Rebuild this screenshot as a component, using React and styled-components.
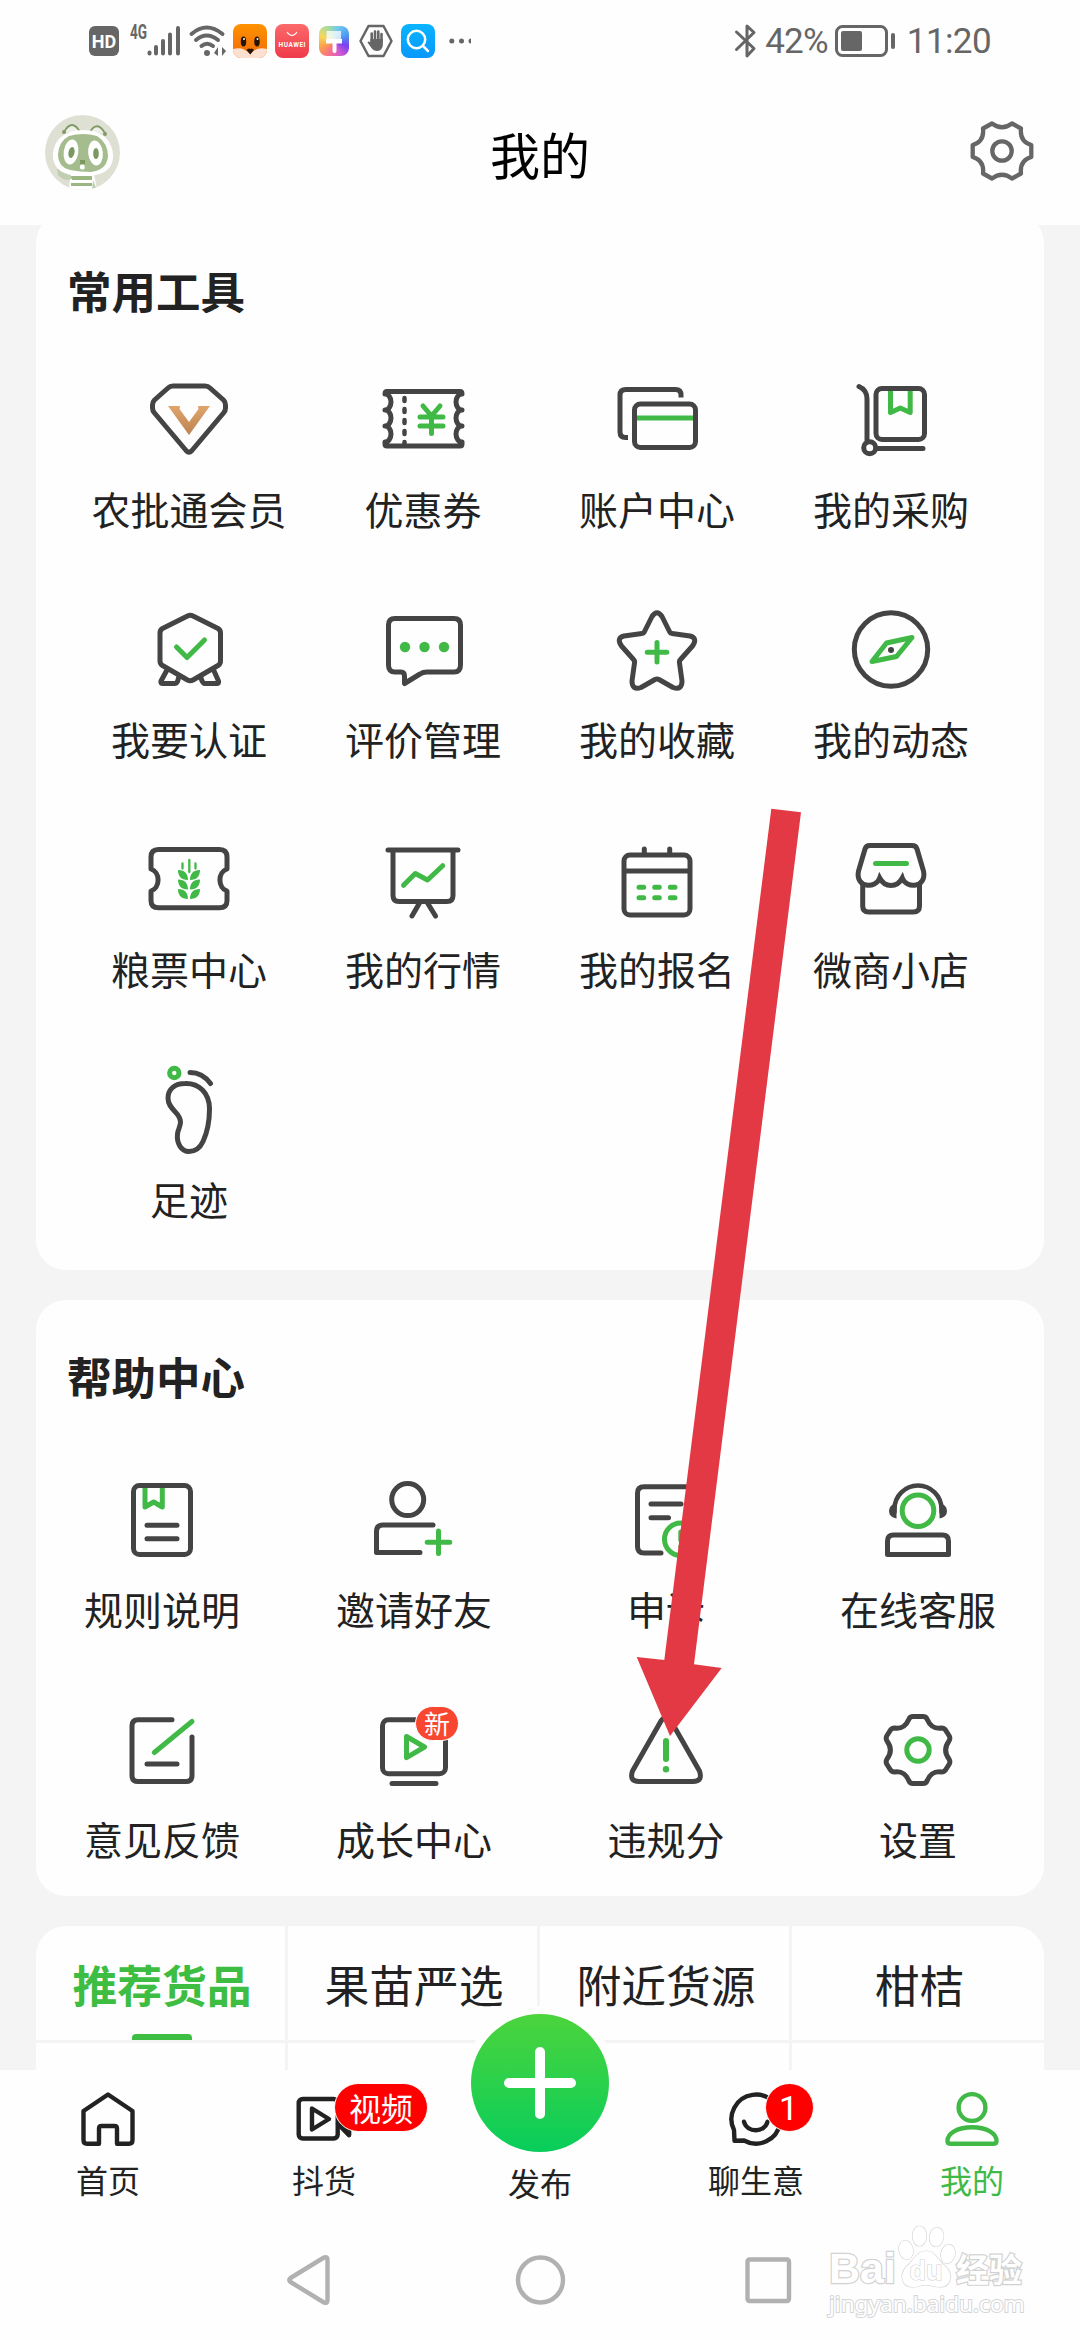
import React from "react";
import styled, { createGlobalStyle } from "styled-components";

const GREEN = "#40b946";
const INK = "#444444";

const GlobalStyle = createGlobalStyle`
    * { box-sizing: border-box; }
    body {
        margin: 0;
        background: #ffffff;
        font-family: "Noto Sans CJK SC", "Noto Sans", sans-serif;
        color: #222222;
    }
`;

const Screen = styled.div`
    position: relative;
    width: 1080px;
    height: 2340px;
    display: flex;
    flex-direction: column;
    overflow: hidden;
    background: #fefefe;
`;

/* ---------- status bar ---------- */

const StatusBar = styled.div`
    height: 80px;
    display: flex;
    align-items: center;
    justify-content: space-between;
    padding: 2px 89px 0;
    color: #666666;
    font-family: Roboto, sans-serif;
`;
const StatusSide = styled.div`
    display: flex;
    align-items: center;
`;
const HdTag = styled.span`
    width: 30px;
    height: 30px;
    border-radius: 6px;
    background: #666666;
    color: #ffffff;
    font: 700 18px/31px Roboto, sans-serif;
    text-align: center;
`;
const NetType = styled.span`
    align-self: flex-start;
    margin-left: 11px;
    width: 17px;
    font: 700 20px/18px Roboto, sans-serif;
    transform: scaleX(0.68);
    transform-origin: left center;
    margin-top: -1px;
`;
const AppTile = styled.span`
    display: flex;
    align-items: center;
    justify-content: center;
    width: ${p => p.$size || 34}px;
    height: ${p => p.$size || 34}px;
    margin-left: ${p => p.$gap || 8}px;
    border-radius: 8px;
    overflow: hidden;
    background: ${p => p.$bg};
`;
const Glyph = styled.svg`
    display: block;
    flex: none;
    width: ${p => p.$w}px;
    height: ${p => p.$h}px;
    margin-left: ${p => p.$gap || 0}px;
    overflow: visible;
`;
const StatusText = styled.span`
    font-size: 35px;
    line-height: 40px;
    letter-spacing: ${p => p.$track || 0}px;
    margin-left: ${p => p.$gap || 0}px;
    padding-top: 1px;
`;

/* ---------- header ---------- */

const Header = styled.header`
    height: 145px;
    padding: 0 45px;
    display: grid;
    grid-template-columns: 75px 1fr 75px;
    justify-items: center;
    align-items: center;
`;
const Title = styled.h1`
    margin: 0;
    padding-top: 1px;
    font-size: 50px;
    line-height: 70px;
    font-weight: 400;
    color: #000000;
`;
const HeaderAction = styled.div`
    padding: 0 0 3px 9px;
`;

/* ---------- cards ---------- */

const Content = styled.main`
    height: 1845px;
    padding: 0 36px;
    overflow: hidden;
    background: #f4f4f4;
    display: flex;
    flex-direction: column;
    gap: 30px;
`;
const Card = styled.section`
    flex: none;
    background: #fefefe;
    border-radius: 30px;
    margin-top: ${p => p.$shift || 0}px;
    padding-bottom: ${p => p.$bottom}px;
`;
const CardTitle = styled.h2`
    margin: 0;
    height: ${p => p.$height}px;
    padding: ${p => p.$top}px 0 0 31px;
    font-size: 44.5px;
    line-height: 58px;
    font-weight: 700;
`;
const Grid = styled.div`
    display: grid;
    grid-template-columns: repeat(4, 1fr);
    row-gap: 68px;
    padding: 0 ${p => p.$inset || 0}px;
`;
const Cell = styled.div`
    display: flex;
    flex-direction: column;
    align-items: center;
    gap: 14px;
    font-size: 39px;
    line-height: 58px;
    white-space: nowrap;
`;
const IconBox = styled.div`
    position: relative;
    width: 90px;
    height: 90px;
`;
const NewBadge = styled.span`
    position: absolute;
    left: 46px;
    top: 1px;
    width: 44px;
    height: 35px;
    border-radius: 18px;
    border: 1px solid #ffffff;
    background: #f94630;
    color: #ffffff;
    font-size: 26px;
    line-height: 31px;
    text-align: center;
`;

/* ---------- goods tabs ---------- */

const Tabs = styled.div`
    flex: none;
    display: grid;
    grid-template-columns: 249px 249px 249px 252px;
    gap: 3px;
    border-radius: 30px 30px 0 0;
    overflow: hidden;
`;
const Tab = styled.div`
    height: 114px;
    display: flex;
    flex-direction: column;
    align-items: center;
    justify-content: space-between;
    background: #fefefe;
    font-size: 44.8px;
    line-height: 64px;
    padding-top: 26px;
    padding-left: 3px;
    font-weight: ${p => (p.$active ? 700 : 400)};
    color: ${p => (p.$active ? "#3dbd42" : "#222222")};
`;
const TabMark = styled.span`
    width: 60px;
    height: 6px;
    border-radius: 4px 4px 0 0;
    background: #3dbd42;
`;
const GoodsCell = styled.div`
    height: 60px;
    background: #fefefe;
`;

/* ---------- bottom navigation ---------- */

const NavBar = styled.nav`
    position: relative;
    height: 150px;
    display: grid;
    grid-template-columns: repeat(5, 1fr);
    background: #fefefe;
`;
const NavItem = styled.div`
    position: relative;
    display: flex;
    flex-direction: column;
    align-items: center;
    gap: 10px;
    padding-top: 19px;
    font-size: 32px;
    line-height: 40px;
    color: ${p => (p.$active ? "#40b946" : "#222222")};
`;
const PublishItem = styled(NavItem)`
    padding-top: 0;
    margin-top: -56px;
`;
const PublishButton = styled.span`
    flex: none;
    width: 138px;
    height: 138px;
    border-radius: 50%;
    background: linear-gradient(to bottom, #4cd43c, #08cd5b);
    box-shadow: 0 0 0 8px #fefefe;
    display: flex;
    align-items: center;
    justify-content: center;
`;
const NavBadge = styled.span`
    position: absolute;
    left: ${p => p.$left}px;
    top: 13px;
    width: ${p => p.$width}px;
    height: 49px;
    border-radius: 25px;
    border: 1px solid #ffffff;
    background: #fe0000;
    color: #ffffff;
    font-size: 32px;
    line-height: 46px;
    text-align: center;
`;
const CountBadge = styled(NavBadge)`
    font-family: Roboto, sans-serif;
    font-size: 34px;
    line-height: 49px;
    padding-right: 2px;
`;
const SystemBar = styled.div`
    height: 120px;
    padding: 0 282px 0 279px;
    display: flex;
    align-items: center;
    justify-content: space-between;
`;

/* ---------- things lying over the page ---------- */

const ArrowLayer = styled.svg`
    position: absolute;
    left: 630px;
    top: 800px;
    width: 180px;
    height: 940px;
    pointer-events: none;
`;
const Watermark = styled.div`
    position: absolute;
    left: 829px;
    top: 2221px;
    width: 200px;
    color: #ffffff;
    -webkit-text-stroke: 2.4px #d2d2d2;
    paint-order: stroke fill;
`;
const WatermarkTop = styled.div`
    height: 66px;
    display: flex;
    align-items: flex-end;
    font: 700 43px/38px "Liberation Sans", sans-serif;
`;
const WatermarkCn = styled.span`
    font: 700 33px/38px "Noto Sans CJK SC", sans-serif;
    margin-left: 3px;
`;
const WatermarkUrl = styled.div`
    margin-top: 4px;
    font: 400 22.6px/26px "Noto Sans", sans-serif;
    -webkit-text-stroke: 2px #d6d6d6;
`;

/* every line icon is drawn around its own centre */
const Line = ({ size = 90, color = INK, width = 5, cap = "round", children }) => (
    <Glyph
        $w={size}
        $h={size}
        viewBox={`${-size / 2} ${-size / 2} ${size} ${size}`}
        fill="none"
        stroke={color}
        strokeWidth={width}
        strokeLinecap={cap}
        strokeLinejoin="round"
    >
        {children}
    </Glyph>
);

const icons = {
    vip: (
        <>
            <defs>
                <linearGradient id="gold" x1="0" y1="0" x2="0" y2="1">
                    <stop offset="0" stopColor="#dfa56b" />
                    <stop offset="1" stopColor="#bd8250" />
                </linearGradient>
            </defs>
            <path d="M-16 -34H16Q19 -34 21 -32L34.500 -20Q36.500 -18 36.500 -15V-12Q36.500 -9 34.500 -7L2.500 31Q0 33.500 -2.500 31L-34.500 -7Q-36.500 -9 -36.500 -12V-15Q-36.500 -18 -34.500 -20L-21 -32Q-19 -34 -16 -34Z" />
            <path d="M-21 -14H-9L-9.500 -11L0 2L9.500 -11L9 -14H21L0 15Z" fill="url(#gold)" stroke="none" />
        </>
    ),
    coupon: (
        <>
            <path d="M-36 -28.500H37Q39 -28.500 39 -26A6 8 0 0 0 39 -10A6 8 0 0 0 39 6A6 8 0 0 0 39 22V24Q39 26 37 26H-36Q-38 26 -38 24V22A6 8 0 0 0 -38 6A6 8 0 0 0 -38 -10A6 8 0 0 0 -38 -26Q-38 -28.500 -36 -28.500Z" />
            <path d="M-18.500 -22V25" strokeWidth="4.500" strokeDasharray="3 8" />
            <path d="M0 -14L8.500 -4L17 -14M8.500 -4V13.500M-3 -3H20M-3 6H20" stroke={GREEN} />
        </>
    ),
    account: (
        <>
            <path d="M24 -22.500V-25Q24 -30.500 18.500 -30.500H-31Q-37 -30.500 -37 -25V12Q-37 17.500 -31.500 17.500H-29" strokeLinecap="butt" />
            <path d="M-20 -2H36" stroke={GREEN} strokeLinecap="butt" />
            <rect x="-22.500" y="-16" width="61" height="43.500" rx="6" />
        </>
    ),
    purchase: (
        <>
            <path d="M-0.500 -29V-7.500L9.300 -12L19.200 -7.500V-29" stroke={GREEN} strokeLinecap="butt" />
            <path d="M-32 -33.500Q-24 -30 -24 -21V20M-14 28.500H32" />
            <circle cx="-21.300" cy="27.700" r="6" />
            <rect x="-15" y="-31.500" width="48.500" height="51" rx="6" />
        </>
    ),
    certify: (
        <>
            <path d="M-1.500 -34Q1.300 -35.500 4 -34L29 -21.500Q31.500 -20 31.500 -17V11Q31.500 14 29 15.500L4 30Q1.300 31.500 -1.500 30L-26.500 15.500Q-29 14 -29 11V-17Q-29 -20 -26.500 -21.500Z" />
            <path d="M-22 20L-28 31Q-29 33.500 -26 33.500H-14Q-11.500 33.500 -10.500 28M24.600 20L29.500 31Q30.500 33.500 27.500 33.500H16Q13.500 33.500 12 28" />
            <path d="M-12.500 -3L-2 7.500L15.500 -10" stroke={GREEN} />
        </>
    ),
    review: (
        <>
            <path d="M-28 -31.500H31Q37.500 -31.500 37.500 -25V15Q37.500 22 31 22H4Q0 22 -3 24L-18.500 33.500V26Q-18.500 22 -22 22H-28Q-34.500 22 -34.500 15V-25Q-34.500 -31.500 -28 -31.500Z" />
            <g fill={GREEN} stroke="none">
                <circle cx="-18" cy="-3" r="5.200" />
                <circle cx="1.500" cy="-3" r="5.200" />
                <circle cx="21" cy="-3" r="5.200" />
            </g>
        </>
    ),
    favorite: (
        <>
            <path d="M-5 -33.500Q0 -41 5 -33.500L13 -17.500Q13.500 -16.500 15 -16.500L33 -14Q41 -12 35.500 -4L23.500 9.500Q22 11 22.500 13L25 31Q25 40.500 16 37.500L2 29.500Q0 28.500 -2 29.500L-16 37.500Q-25 40.500 -25 31L-22.500 13Q-22 11 -23.500 9.500L-35.500 -4Q-41 -12 -33 -14L-15 -16.500Q-13.500 -16.500 -13 -17.500Z" />
            <path d="M0 -7.500V12M-9.800 2.200H9.800" stroke={GREEN} />
        </>
    ),
    moments: (
        <>
            <circle cx="0" cy="-0.500" r="36.700" />
            <path d="M-19 11.500L-4.500 -7L21 -12.500L5.500 6.500Z" stroke={GREEN} />
            <circle cx="0" cy="0" r="3" fill={INK} stroke="none" />
        </>
    ),
    grain: (
        <>
            <path d="M-30.500 -30.500H30.500Q38 -30.500 38 -23V-11A10 11.500 0 0 0 38 11V20.500Q38 27.800 30.500 27.800H-30.500Q-38 27.800 -38 20.500V11A10 11.500 0 0 0 -38 -11V-23Q-38 -30.500 -30.500 -30.500Z" />
            <path d="M-6.500 -16.500V-11.500M0.300 -20V-8M6.500 -16.500V-11.500" stroke={GREEN} strokeWidth="2.300" />
            {[0, 9.500, 19].map(y => (
                <path
                    key={y}
                    transform={`translate(0 ${y})`}
                    d="M-11 -10C-4 -10 -1 -6 -1 0C-8 0 -11 -4 -11 -10ZM11 -10C4 -10 1 -6 1 0C8 0 11 -4 11 -10Z"
                    fill={GREEN}
                    stroke="none"
                />
            ))}
        </>
    ),
    market: (
        <>
            <path d="M-35 -30H35M-30 -29V15.500Q-30 21.500 -24 21.500H24Q30 21.500 30 15.500V-29M-3.500 23L-11 36M4.500 23L12.500 36" />
            <path d="M-19.500 5.300L-7.700 -6.500L4.500 0L19.700 -14.300" stroke={GREEN} />
        </>
    ),
    signup: (
        <>
            <rect x="-33" y="-25" width="66" height="60" rx="6" />
            <path d="M-32 -9H32M-12.700 -31V-26M12.700 -31V-26" />
            <path d="M-18 7.300H-13.300M-2.300 7.300H2.300M13.300 7.300H18M-18 17.700H-13.300M-2.300 17.700H2.300M13.300 17.700H18" stroke={GREEN} />
        </>
    ),
    shop: (
        <>
            <path d="M-28.300 5V26Q-28.300 32 -22.300 32H22.300Q28.500 32 28.500 26V5" strokeLinecap="butt" />
            <path d="M-21 -34.500H21Q25 -34.500 26 -31L32.500 -9C36 8 15 9 11.300 -2C6 8 -6 8 -11.300 -2C-15 9 -36 8 -32.500 -9L-26 -31Q-25 -34.500 -21 -34.500Z" strokeLinejoin="miter" />
            <path d="M-15.500 -16.500H15.500" stroke={GREEN} />
        </>
    ),
    footprint: (
        <>
            <circle cx="-14.700" cy="-37" r="4.700" stroke={GREEN} />
            <path d="M1 -37.500Q13.500 -37.500 21.500 -26.500" />
            <path d="M-4 -26.500C10 -27 20.500 -17 20.500 -1C20.500 12 17.500 24 14 31.500C11 38 6 41.500 0 41.500C-8 41.500 -12.500 33 -11.500 24C-11 19 -8.500 17 -8.500 12C-8.500 2 -21 0 -21 -12C-21 -21 -14 -26.500 -4 -26.500Z" />
        </>
    ),
    rules: (
        <>
            <path d="M-17 -32V-13L-8.300 -18L0.300 -13V-32" stroke={GREEN} strokeLinecap="butt" />
            <rect x="-28.500" y="-34.500" width="57" height="69" rx="6" />
            <path d="M-15 5.300H15M-15 18.700H15" />
        </>
    ),
    invite: (
        <>
            <circle cx="-6.300" cy="-20.400" r="16" />
            <path d="M19 5H-31Q-37.500 5 -37.500 11.500V32.500H6" />
            <path d="M24.500 11V33.500M13.200 22.300H35.800" stroke={GREEN} />
        </>
    ),
    appeal: (
        <>
            <path d="M-5 33H-22Q-28.500 33 -28.500 26.500V-27Q-28.500 -33.300 -22 -33.300H20Q26.500 -33.300 26.500 -27V-6M-15 -16H15M-15 -2.300H2.500" />
            <circle cx="14.800" cy="19.300" r="16.300" stroke={GREEN} />
            <path d="M14.800 12V20M14.800 26.500V27" stroke={GREEN} />
        </>
    ),
    service: (
        <>
            <circle cx="0" cy="-9.300" r="15.800" stroke={GREEN} />
            <path d="M-23.500 -8V-11A23.500 23.500 0 0 1 23.500 -11V-8" strokeWidth="4.500" />
            <path d="M-21.500 -17Q-29 -15 -29 -9T-21.500 -1.500ZM21.500 -17Q29 -15 29 -9T21.500 -1.500Z" fill={INK} stroke="none" />
            <path d="M-24.500 15H24.500Q30.500 15 30.500 21V34.500H-30.500V21Q-30.500 15 -24.500 15Z" />
        </>
    ),
    feedback: (
        <>
            <path d="M10 -30.300H-24Q-30 -30.300 -30 -24.300V25.500Q-30 31.500 -24 31.500H24Q30 31.500 30 25.500V-13M-15 14H15" />
            <path d="M-7.700 2.500L30 -28.500" stroke={GREEN} />
        </>
    ),
    growth: (
        <>
            <rect x="-31.500" y="-30.300" width="63" height="54" rx="6" />
            <path d="M-22 33.500H22" />
            <path d="M-7.500 -13.500L10.500 -3L-7.500 7.700Z" stroke={GREEN} />
        </>
    ),
    violation: (
        <>
            <path d="M-5 -29Q0 -36 5 -29L33.500 21Q37 31.500 27 31.500H-27Q-37 31.500 -33.500 21Z" />
            <path d="M0 -9V9" stroke={GREEN} strokeWidth="6" />
            <circle cx="0" cy="19.300" r="3.200" fill={GREEN} stroke="none" />
        </>
    ),
    settings: (
        <>
            <path d="M-5 -33.500H5Q8 -33.500 9 -31C12 -24 16 -21 23.500 -22Q26 -22 27.500 -20L31.300 -14Q32.500 -11.500 31 -9C26.500 -3 26.500 3 31 9Q32.500 11.500 31.300 14L27.500 20Q26 22 23.500 22C16 21 12 24 9 31Q8 33.500 5 33.500H-5Q-8 33.500 -9 31C-12 24 -16 21 -23.500 22Q-26 22 -27.500 20L-31.300 14Q-32.500 11.500 -31 9C-26.500 3 -26.500 -3 -31 -9Q-32.500 -11.500 -31.300 -14L-27.500 -20Q-26 -22 -23.500 -22C-16 -21 -12 -24 -9 -31Q-8 -33.500 -5 -33.500Z" />
            <circle cx="0" cy="0" r="11.200" stroke={GREEN} />
        </>
    ),
    home: <path d="M0 -24.500L24.500 -8V21Q24.500 24.700 21 24.700H9V9.500Q9 7 6.500 7H-6.500Q-9 7 -9 9.500V24.700H-21Q-24.500 24.700 -24.500 21V-8Z" />,
    video: (
        <>
            <rect x="-25.300" y="-20" width="39" height="39.500" rx="4" />
            <path d="M-12 -10.500L5 0L-12 10.500ZM14 5L25 16V-15L14 -5" />
            <path d="M15 5L25 16V5Z" fill="#222222" />
        </>
    ),
    chat: <path d="M-22 11A24.500 24.500 0 1 1 -12 21.500L-21.500 21.800ZM-12 2.700C-9 14 8.500 14 11.500 2.700" />,
    mine: (
        <>
            <circle cx="0" cy="-11.500" r="13.400" />
            <path d="M-22 24.700H22Q24.500 24.700 24.500 22C24.500 14 14 8.300 0 8.300S-24.500 14 -24.500 22Q-24.500 24.700 -22 24.700Z" />
        </>
    ),
};

const tools = [
    ["农批通会员", "vip"],
    ["优惠券", "coupon"],
    ["账户中心", "account"],
    ["我的采购", "purchase"],
    ["我要认证", "certify"],
    ["评价管理", "review"],
    ["我的收藏", "favorite"],
    ["我的动态", "moments"],
    ["粮票中心", "grain"],
    ["我的行情", "market"],
    ["我的报名", "signup"],
    ["微商小店", "shop"],
    ["足迹", "footprint"],
];

const helps = [
    ["规则说明", "rules"],
    ["邀请好友", "invite"],
    ["申诉", "appeal"],
    ["在线客服", "service"],
    ["意见反馈", "feedback"],
    ["成长中心", "growth", "新"],
    ["违规分", "violation"],
    ["设置", "settings"],
];

const Entries = ({ list, inset }) => (
    <Grid $inset={inset}>
        {list.map(([label, icon, badge]) => (
            <Cell key={label}>
                <IconBox>
                    <Line>{icons[icon]}</Line>
                    {badge && <NewBadge>{badge}</NewBadge>}
                </IconBox>
                <span>{label}</span>
            </Cell>
        ))}
    </Grid>
);

const Status = () => (
    <StatusBar>
        <StatusSide>
            <HdTag>HD</HdTag>
            <NetType>4G</NetType>
            <Glyph $w={34} $h={32} $gap={0} viewBox="0 0 34 32" stroke="#666666" strokeWidth="4" strokeLinecap="round">
                <path d="M2.500 27.500V28.500M9 22V28.500M16 16V28.500M23 9.500V28.500M31 3V28.500" />
            </Glyph>
            <Glyph $w={38} $h={32} $gap={8} viewBox="0 0 38 32" fill="none" stroke="#666666" strokeWidth="4" strokeLinecap="round">
                <path d="M2.500 9Q17.500 -4 33.500 9M7 15Q17.500 6 29 15M12.500 21Q18 16.500 24 21" />
                <circle cx="18" cy="28" r="3" fill="#666666" stroke="none" />
                <path d="M29 22V31L25 28M33 31V22L37 26" fill="#666666" stroke="none" />
            </Glyph>
            <AppTile $bg="linear-gradient(#ff9200, #f06a0a)" $gap={6}>
                <svg width="34" height="34" viewBox="0 0 34 34">
                    <path d="M0 25Q10 22 17 30Q24 22 34 25V34H0Z" fill="#fde0cf" />
                    <ellipse cx="10.500" cy="17.500" rx="2.700" ry="5" fill="#241405" />
                    <ellipse cx="24" cy="17.500" rx="2.700" ry="5" fill="#241405" />
                    <circle cx="11" cy="15" r="1" fill="#ffffff" />
                    <circle cx="24.500" cy="15" r="1" fill="#ffffff" />
                    <path d="M13.500 26Q15.500 23.500 17.300 25Q19 23.500 21 26L17.300 30.500Z" fill="#241405" />
                </svg>
            </AppTile>
            <AppTile $bg="linear-gradient(#fb6a6a, #ef3a49)">
                <svg width="34" height="34" viewBox="0 0 34 34">
                    <path d="M12 8Q17 15 22 8" fill="none" stroke="#ffffff" strokeWidth="1.200" />
                    <text x="17" y="22.500" fill="#ffffff" fontSize="6.500" fontWeight="700" fontFamily="Roboto, sans-serif" textAnchor="middle" textLength="27">
                        HUAWEI
                    </text>
                </svg>
            </AppTile>
            <AppTile $size={30} $gap={10} $bg="conic-gradient(from 20deg, #6fc8f0, #4a9bf0, #7a3ff2, #d25ad0, #f96f8c, #fba04a, #f9d65c, #a5dca0, #6fc8f0)">
                <svg width="30" height="30" viewBox="0 0 30 30">
                    <path d="M7.500 5H22V13H7.500Z" fill="#ffffff" opacity="0.75" />
                    <path d="M7 13H23V17.500H17.500V25.500Q15.500 29 13.500 25.500V17.500H7Z" fill="#ffffff" />
                </svg>
            </AppTile>
            <Glyph $w={34} $h={34} $gap={10} viewBox="0 0 34 34" fill="none" stroke="#666666" strokeWidth="2.500">
                <path d="M9.500 2H24.500L32.500 17L24.500 32H9.500L1.500 17Z" strokeLinejoin="round" />
                <path d="M12.700 18V9.500M16 17V7.500M19.300 17V7.500M22.500 18V10" strokeWidth="2.600" strokeLinecap="round" />
                <path d="M11.400 15H23.800V22Q22.500 27 18 27Q14.500 27 12.500 24L8.500 18.500Q9.500 16.500 11.400 18.500Z" fill="#666666" stroke="none" />
            </Glyph>
            <AppTile $bg="linear-gradient(#08b4ff, #0a98fb)">
                <svg width="34" height="34" viewBox="0 0 34 34" fill="none" stroke="#ffffff" strokeWidth="2.500" strokeLinecap="round">
                    <circle cx="15.500" cy="15.500" r="8.700" />
                    <path d="M22 22L27 27" />
                </svg>
            </AppTile>
            <Glyph $w={22} $h={6} $gap={14} viewBox="0 0 22 6" fill="#666666">
                <circle cx="2.800" cy="3" r="2.500" />
                <circle cx="12.500" cy="3" r="2.500" />
                <path d="M22 .5A2.500 2.500 0 0 0 22 5.500Z" />
            </Glyph>
        </StatusSide>
        <StatusSide>
            <Glyph $w={21} $h={34} viewBox="0 0 21 34" fill="none" stroke="#666666" strokeWidth="3" strokeLinecap="round" strokeLinejoin="round">
                <path d="M1.500 8L19 24.500L12 32V2L19 8.500L1.500 25.500" />
            </Glyph>
            <StatusText $gap={9} $track={-0.8}>42%</StatusText>
            <Glyph $w={60} $h={32} $gap={7} viewBox="0 0 60 32" fill="none" stroke="#666666">
                <rect x="1.500" y="1.500" width="50" height="29" rx="6" strokeWidth="3" />
                <rect x="6" y="6" width="21" height="20" rx="2" fill="#666666" stroke="none" />
                <path d="M58 10V22" strokeWidth="4" strokeLinecap="round" />
            </Glyph>
            <StatusText $gap={12} $track={-0.6}>11:20</StatusText>
        </StatusSide>
    </StatusBar>
);

const Avatar = () => (
    <Glyph $w={75} $h={75} viewBox="0 0 75 75" fill="none">
        <defs>
            <clipPath id="round"><circle cx="37.500" cy="37.500" r="37.500" /></clipPath>
        </defs>
        <g clipPath="url(#round)">
            <rect width="75" height="75" fill="#dee0d3" />
            <path d="M19 17Q27 3 35 17M45 17Q52 5 60 18" fill="#eef0e8" stroke="#829a68" strokeWidth="1.800" />
            <circle cx="19" cy="17" r="2" fill="#829a68" />
            <circle cx="60" cy="19" r="2" fill="#829a68" />
            <path d="M26 54H48L52 75H24Z" fill="#ffffff" />
            <path d="M12 54Q22 54 28 63Q20 68 13 60Z" fill="#c0cfb2" />
            <path d="M26 61H47V65H27ZM26 68H47V71H26Z" fill="#9cb682" />
            <path d="M48 65L52 75H47Z" fill="#c0cfb2" />
            <path d="M38 15C58 15 68 27 68 41C68 56 56 61 38 61C19 61 8 55 8 40C8 26 19 15 38 15Z" fill="#ffffff" />
            <path d="M24 21Q38 17 52 21Q63 28 63 41Q62 55 46 57Q35 57 25 55Q13 52 13 39Q14 26 24 21Z" fill="#a5bd8e" />
            <ellipse cx="26" cy="37" rx="7.300" ry="12.500" transform="rotate(8 26 37)" fill="#ffffff" />
            <ellipse cx="50.500" cy="38" rx="7.300" ry="12.500" transform="rotate(-6 50.500 38)" fill="#ffffff" />
            <ellipse cx="26.500" cy="37.500" rx="3" ry="5.500" transform="rotate(12 26.500 37.500)" fill="#7c9861" />
            <ellipse cx="51" cy="38.500" rx="2.800" ry="5.500" fill="#7c9861" />
            <rect x="35" y="45" width="5" height="4" fill="#7c9861" />
            <ellipse cx="37.300" cy="52" rx="2.400" ry="2.600" fill="#ffffff" />
        </g>
    </Glyph>
);

const App = () => (
    <Screen>
        <GlobalStyle />
        <Status />
        <Header>
            <Avatar />
            <Title>我的</Title>
            <HeaderAction>
                <Line size={66} color="#666666" width={4.3}>
                    <path d="M-10 -27.500Q0 -20 10 -27.500L19 -22.500Q17.500 -9.500 29.300 -6V6Q17.500 9.500 19 22.500L10 27.500Q0 20 -10 27.500L-19 22.500Q-17.500 9.500 -29.300 6V-6Q-17.500 -9.500 -19 -22.500Z" />
                    <circle cx="0" cy="0" r="9.700" />
                </Line>
            </HeaderAction>
        </Header>

        <Content>
            <Card $shift={-12} $bottom={43}>
                <CardTitle $height={162} $top={48}>常用工具</CardTitle>
                <Entries list={tools} inset={36} />
            </Card>
            <Card $bottom={29}>
                <CardTitle $height={175} $top={47}>帮助中心</CardTitle>
                <Entries list={helps} />
            </Card>
            <Tabs>
                <Tab $active>
                    推荐货品
                    <TabMark />
                </Tab>
                <Tab>果苗严选</Tab>
                <Tab>附近货源</Tab>
                <Tab>柑桔</Tab>
                <GoodsCell />
                <GoodsCell />
                <GoodsCell />
                <GoodsCell />
            </Tabs>
        </Content>

        <NavBar>
            <NavItem>
                <Line size={60} color="#222222" width={4.4}>{icons.home}</Line>
                首页
            </NavItem>
            <NavItem>
                <Line size={60} color="#222222" width={4.4}>{icons.video}</Line>
                抖货
                <NavBadge $left={118} $width={94}>视频</NavBadge>
            </NavItem>
            <PublishItem>
                <PublishButton>
                    <Line size={80} color="#ffffff" width={10}>
                        <path d="M0 -31V31M-31 0H31" />
                    </Line>
                </PublishButton>
                发布
            </PublishItem>
            <NavItem>
                <Line size={60} color="#222222" width={4.4}>{icons.chat}</Line>
                聊生意
                <CountBadge $left={117} $width={49}>1</CountBadge>
            </NavItem>
            <NavItem $active>
                <Line size={60} color={GREEN} width={4.4}>{icons.mine}</Line>
                我的
            </NavItem>
        </NavBar>

        <SystemBar>
            <Line size={60} color="#b1b1b1" width={4.4}>
                <path d="M15 -22.500Q18.500 -24 18.500 -20V20Q18.500 24 15 22.500L-18.500 2Q-21 0 -18.500 -2Z" />
            </Line>
            <Line size={60} color="#b1b1b1" width={4.4}>
                <circle cx="1.500" cy="0" r="22.500" />
            </Line>
            <Line size={60} color="#b1b1b1" width={4.4}>
                <rect x="-20.500" y="-20.500" width="41.500" height="41.500" rx="2" />
            </Line>
        </SystemBar>

        <Watermark>
            <WatermarkTop>
                Bai
                <Glyph $w={54} $h={62} $gap={3} viewBox="0 2 54 62" fill="#ffffff" stroke="#d2d2d2" strokeWidth="1.200">
                    <ellipse cx="7" cy="27" rx="7" ry="9.500" transform="rotate(-14 7 27)" />
                    <ellipse cx="20.500" cy="13" rx="7" ry="10" />
                    <ellipse cx="37.500" cy="14" rx="7" ry="9.500" transform="rotate(10 37.500 14)" />
                    <ellipse cx="49" cy="31" rx="7" ry="9.500" transform="rotate(12 49 31)" />
                    <path d="M27 28C36 28 39 37 46 43C55 51 52 64 41 64C35 64 32 62 27 62S19 64 14 64C2 64 0 51 8 43C15 37 18 28 27 28Z" />
                    <text x="27" y="57" fontSize="27" fontWeight="700" fontFamily="Liberation Sans, sans-serif" textAnchor="middle">du</text>
                </Glyph>
                <WatermarkCn>经验</WatermarkCn>
            </WatermarkTop>
            <WatermarkUrl>jingyan.baidu.com</WatermarkUrl>
        </Watermark>

        <ArrowLayer viewBox="630 800 180 940">
            <path d="M771.300 808.700L801 812.300L694 1664.300L721.700 1668L670 1736L636.700 1657L664.300 1660Z" fill="#e33945" />
        </ArrowLayer>
    </Screen>
);

export default App;
